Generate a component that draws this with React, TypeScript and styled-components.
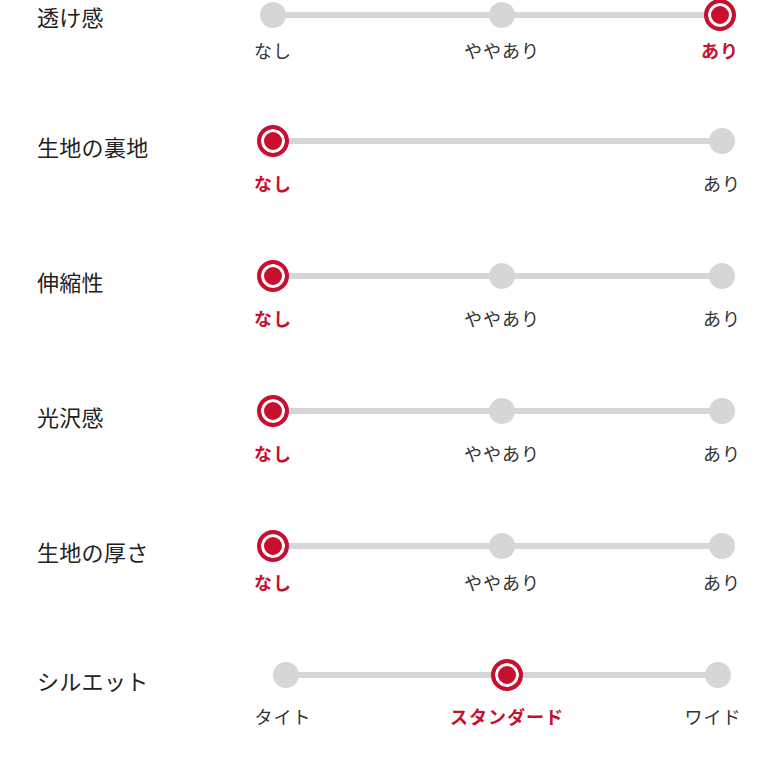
import * as React from "react"
import styled, { createGlobalStyle } from "styled-components"

type Item = {
  title: string
  labels: string[]
  selected: number
  stops: number[]
  labelGap: number
  titleTop?: number
  labelShift?: number[]
}

const items: Item[] = [
  { title: "透け感", labels: ["なし", "ややあり", "あり"], selected: 2, stops: [273, 502, 720], labelGap: 6, titleTop: 1 },
  { title: "生地の裏地", labels: ["なし", "あり"], selected: 0, stops: [273, 722], labelGap: 13 },
  { title: "伸縮性", labels: ["なし", "ややあり", "あり"], selected: 0, stops: [273, 502, 722], labelGap: 13 },
  { title: "光沢感", labels: ["なし", "ややあり", "あり"], selected: 0, stops: [273, 502, 722], labelGap: 13 },
  { title: "生地の厚さ", labels: ["なし", "ややあり", "あり"], selected: 0, stops: [273, 502, 722], labelGap: 7 },
  {
    title: "シルエット",
    labels: ["タイト", "スタンダード", "ワイド"],
    selected: 1,
    stops: [286, 507, 718],
    labelGap: 12,
    labelShift: [-3, 0, -5],
  },
]

const App = () => (
  <>
    <GlobalStyle />
    <Page>
      {items.map((item) => (
        <Row key={item.title}>
          <Title $top={item.titleTop ?? 5}>{item.title}</Title>
          <Slider $start={item.stops[0]}>
            {item.labels.map((label, i) => (
              <Stop key={label} $offset={i === 0 ? 0 : item.stops[i] - item.stops[i - 1]}>
                <DotBox>
                  <Dot $active={i === item.selected} />
                </DotBox>
                <Label
                  $active={i === item.selected}
                  $gap={item.labelGap}
                  $shift={item.labelShift?.[i] ?? 0}
                >
                  {label}
                </Label>
              </Stop>
            ))}
          </Slider>
        </Row>
      ))}
    </Page>
  </>
)

export default App

const RED = "#c8102e"
const GRAY = "#d6d6d6"
const TITLE_LEFT = 37
const TITLE_WIDTH = 200

const GlobalStyle = createGlobalStyle`
  html, body {
    margin: 0;
    padding: 0;
    background: #ffffff;
  }
  body {
    font-family: "Noto Sans CJK JP", "Noto Sans", sans-serif;
    -webkit-font-smoothing: antialiased;
  }
`

const Page = styled.div`
  width: 777px;
  height: 777px;
  overflow: hidden;
  display: flex;
  flex-direction: column;
  gap: 64px;
  margin-top: -2px;
  box-sizing: border-box;

  & > *:first-child {
    margin-bottom: -2px;
  }
`

const Row = styled.div`
  display: flex;
  align-items: flex-start;
`

const Title = styled.div<{ $top: number }>`
  flex: 0 0 auto;
  padding-left: ${TITLE_LEFT}px;
  padding-top: ${(p) => p.$top}px;
  width: ${TITLE_WIDTH}px;
  font-size: 22px;
  line-height: 34px;
  color: #222222;
  letter-spacing: 0.3px;
`

const Slider = styled.div<{ $start: number }>`
  position: relative;
  margin-left: ${(p) => p.$start - TITLE_LEFT - TITLE_WIDTH}px;
  display: flex;

  &::before {
    content: "";
    position: absolute;
    left: 0;
    right: 0;
    top: 14px;
    height: 6px;
    background: ${GRAY};
  }
`

const Stop = styled.div<{ $offset: number }>`
  position: relative;
  width: 0;
  margin-left: ${(p) => p.$offset}px;
  display: flex;
  flex-direction: column;
  align-items: center;
`

const DotBox = styled.div`
  width: 34px;
  height: 34px;
  flex: 0 0 auto;
  display: flex;
  align-items: center;
  justify-content: center;
`

const Dot = styled.div<{ $active: boolean }>`
  box-sizing: border-box;
  border-radius: 50%;
  width: ${(p) => (p.$active ? 32 : 26)}px;
  height: ${(p) => (p.$active ? 32 : 26)}px;
  background: ${(p) => (p.$active ? RED : GRAY)};
  border: ${(p) => (p.$active ? `4px solid ${RED}` : "none")};
  box-shadow: ${(p) => (p.$active ? "inset 0 0 0 3px #ffffff" : "none")};
`

const Label = styled.div<{ $active: boolean; $gap: number; $shift: number }>`
  margin-top: ${(p) => p.$gap}px;
  transform: translateX(${(p) => p.$shift}px);
  white-space: nowrap;
  font-size: 18px;
  line-height: 24px;
  letter-spacing: 1px;
  font-weight: ${(p) => (p.$active ? 700 : 400)};
  color: ${(p) => (p.$active ? RED : "#333333")};
`
